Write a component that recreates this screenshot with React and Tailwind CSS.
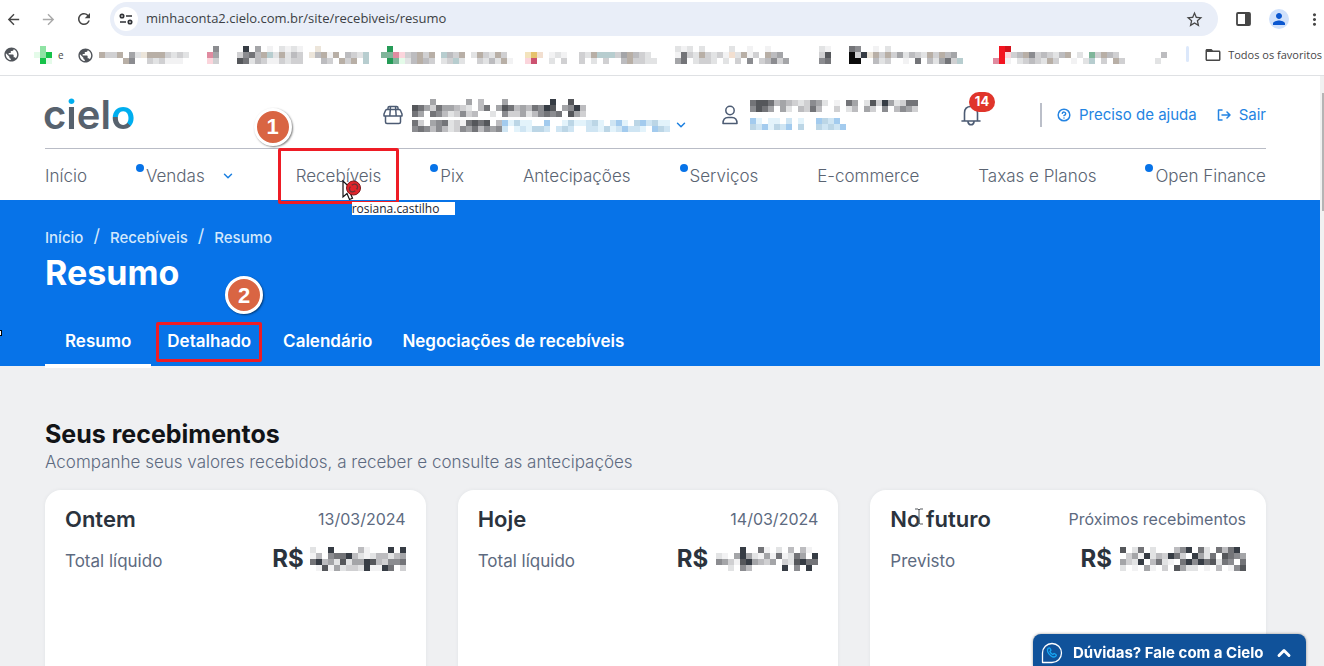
import { MdArrowBack, MdArrowForward, MdRefresh, MdStarBorder, MdMoreVert, MdPublic, MdFolderOpen, MdPerson } from 'react-icons/md'
import { ChevronDown, ChevronUp, CircleHelp } from 'lucide-react'

const MOSAIC_COLORS = {
  0: '#0a0a0a', 1: '#363c44', 2: '#55575b', 3: '#737478', 4: '#8b8c90', 5: '#a4a5a8', 6: '#bcbcbf', 7: '#d0d0d2', 8: '#e2e3e4', 9: '#f2f2f3',
  g: '#15c249', h: '#8fe3a4', i: '#e4fbe9', k: '#7fb59a', e: '#259b57', t: '#b7cdcf',
  p: '#e08ba0', q: '#fbd5dc', m: '#cc5270', r: '#f31420', u: '#d3121b', y: '#e6c36c', z: '#f3e3bd', o: '#f2dfd0',
  s: '#b8afa6', w: '#ece5da', b: '#a3cbee', c: '#cfe5f3', d: '#e3f3fb', f: '#bcd6e6',
}

const BOOKMARKS = [
  { name: 'Favorito 2', className: 'ml-[14px]', rows: ['.h.', 'ihg', '.gi'] },
  { name: 'Favorito 3', className: 'ml-[6px]', globe: true, rows: ['...............', 's77s.58wsss7878', '....s4..787999.'], prefix: 'e' },
  { name: 'Favorito 4', className: 'ml-[18px]', rows: ['.4', 'p5', 'q7'] },
  { name: 'Favorito 5', className: 'ml-[18px]', rows: ['.1.5.9.8989', '7436st8s867', '23867997877'] },
  { name: 'Favorito 6', className: 'ml-[6px]', rows: ['.w........', 'w6s9s.678t', '..67.s7s.t'] },
  { name: 'Favorito 7', className: 'ml-3', rows: ['.e....................', 'kkpq76s7s.t67s.8s78s7.', '.eki86s67.87t8..7868s9'] },
  { name: 'Favorito 8', className: 'ml-3', rows: ['...', 'zyo', 'qm.'] },
  { name: 'Favorito 9', className: 'ml-[6px]', rows: ['..................', '989..78sttt75s678.', '8.7..7.8.7..6s7788'] },
  { name: 'Favorito 10', className: 'ml-[18px]', rows: ['898.8....8..9..9....', '9378s7879o8s97.s65..', '53.8778.8.7.4.76475.'] },
  { name: 'Favorito 11', className: 'ml-6', rows: ['89', '72', '43'] },
  { name: 'Favorito 12', className: 'ml-[18px]', rows: ['34..9.8.............', '071ws7s758678s7s65..', '00..687..9.3.68537t.'] },
  { name: 'Favorito 13', className: 'ml-6', rows: ['.ru...................', '.rq76s476786s.8.k7s67.', 'pr9.87678s7..9.8t.7.s7'] },
  { name: 'Favorito 14', className: 'ml-[30px]', rows: ['..', '.6', '8.'] },
]

const NAV_ITEMS = [
  { label: 'Início' },
  { label: 'Vendas', dot: true, menu: true },
  { label: 'Recebíveis', marked: true },
  { label: 'Pix', dot: true },
  { label: 'Antecipações' },
  { label: 'Serviços', dot: true },
  { label: 'E-commerce' },
  { label: 'Taxas e Planos' },
  { label: 'Open Finance', dot: true },
]

const CARDS = [
  {
    title: 'Ontem', when: '13/03/2024', label: 'Total líquido', gap: 'gap-0',
    rows: ['.8..1....69...1.1', '.96.4331689866865', '.3165828551267443', '..9295877819913.7'],
  },
  {
    title: 'Hoje', when: '14/03/2024', label: 'Total líquido', gap: 'gap-2',
    rows: ['....1..39.8.6.69.', '89.515895939835.1', '4579215675.782133', '..8.46.....1.4.1.'],
  },
  {
    title: 'No futuro', when: 'Próximos recebimentos', label: 'Previsto', gap: 'gap-2',
    rows: ['2.83.8...641.38.3631.', '.7591867137.1583.2345', '5781.6389.314132834.3', '8.9.59.7.2588.9.6.942'],
  },
]

function Mosaic({ rows, className = '' }) {
  const width = rows[0].length * 6
  const height = rows.length * 6
  return (
    <svg width={width} height={height} viewBox={`0 0 ${width} ${height}`} shapeRendering="crispEdges" className={`shrink-0 ${className}`} aria-hidden="true">
      {rows.map((row, y) =>
        row.split('').map((c, x) =>
          c === '.' ? null : <rect key={`${x}-${y}`} x={x * 6} y={y * 6} width="6" height="6" fill={MOSAIC_COLORS[c]} />
        )
      )}
    </svg>
  )
}

function Step({ number, className }) {
  return (
    <span className={`absolute z-20 flex size-[38px] items-center justify-center rounded-full border-[3px] border-white bg-[#d96543] font-['Liberation_Sans'] text-[22px] font-bold text-white shadow-[1px_1px_2px_rgba(0,0,0,0.5)] ${className}`}>
      {number}
    </span>
  )
}

function BrowserBar() {
  return (
    <div className="border-b border-[#dfe1e4] bg-white font-['Open_Sans',sans-serif] text-[#474747]">
      <div className="flex h-[38px] items-center pl-[5px]">
        <button aria-label="Voltar" className="text-[#454545]"><MdArrowBack size={17} /></button>
        <button aria-label="Avançar" className="ml-[18px] text-[#a9a9a9]"><MdArrowForward size={17} /></button>
        <button aria-label="Recarregar" className="ml-[18px] text-[#454545]"><MdRefresh size={18} /></button>
        <div className="ml-[17px] flex h-[34px] flex-1 items-center rounded-full bg-[#e9eef8] pr-[14px] pl-1">
          <button aria-label="Informações do site" className="flex size-6 items-center justify-center rounded-full bg-white">
            <svg width="14" height="12" viewBox="0 0 14 12" fill="none" stroke="#303236" strokeWidth="1.7">
              <circle cx="3" cy="3" r="1.7" />
              <path d="M7 3h6M1 9h6" />
              <circle cx="11" cy="9" r="1.7" />
            </svg>
          </button>
          <input aria-label="Endereço" defaultValue="minhaconta2.cielo.com.br/site/recebiveis/resumo" className="ml-2 min-w-0 flex-1 bg-transparent text-[13px] text-[#3c3f44] outline-none" />
          <button aria-label="Adicionar aos favoritos"><MdStarBorder size={19} /></button>
        </div>
        <button aria-label="Painel lateral" className="ml-[18px]">
          <svg width="15" height="14" viewBox="0 0 15 14">
            <rect x="1" y="1" width="13" height="12" rx="1" fill="none" stroke="#454545" strokeWidth="1.8" />
            <path d="M9 1h5v12H9z" fill="#454545" />
          </svg>
        </button>
        <button aria-label="Perfil" className="ml-[18px] flex size-5 items-center justify-center rounded-full bg-[#d0e1fb] text-[#0b57d0]">
          <MdPerson size={18} />
        </button>
        <button aria-label="Menu" className="ml-4"><MdMoreVert size={19} /></button>
      </div>
      <div className="flex h-[37px] items-start overflow-hidden pt-2 pl-[3px]">
        <button aria-label="Favorito 1" className="text-[#50545a]"><MdPublic size={17} /></button>
        {BOOKMARKS.map(b => (
          <button key={b.name} aria-label={b.name} className={`flex shrink-0 items-center gap-[5px] ${b.className}`}>
            {b.prefix && <span className="mr-2 text-[10px] leading-4">{b.prefix}</span>}
            {b.globe && <MdPublic size={17} className="text-[#50545a]" />}
            <Mosaic rows={b.rows} />
          </button>
        ))}
        <span className="ml-auto h-4 w-[3px] shrink-0 rounded bg-[#dce8fb]" />
        <button className="ml-[15px] flex shrink-0 items-center gap-[6px] pr-[2px] text-[11px] leading-[18px] whitespace-nowrap">
          <MdFolderOpen size={18} />
          Todos os favoritos
        </button>
      </div>
    </div>
  )
}

function Logo() {
  return (
    <a href="#inicio" aria-label="cielo" className="-ml-[2px] block text-[40px] leading-[48px] font-semibold text-[#57626e]">
      c<span className="bg-linear-to-b from-[#00aeef] from-34% to-[#57626e] to-34% bg-clip-text text-transparent">i</span>el
      <span className="bg-[conic-gradient(from_-80deg_at_50%_58%,#00aeef_0deg_215deg,#57626e_215deg_360deg)] bg-clip-text text-transparent">o</span>
    </a>
  )
}

function Header() {
  return (
    <header className="bg-white pr-[54px] pl-[45px] text-[#5a6472]">
      <div className="flex h-[73px] items-center border-b border-[#b9bcc6] pt-[6px]">
        <div className="w-[338px]"><Logo /></div>
        <div className="flex w-[339px] items-center">
          <svg width="20" height="20" viewBox="0 0 20 20" fill="none" stroke="#4c5b73" strokeWidth="1.5" strokeLinejoin="round">
            <path d="M5 4.500V3q0-1.500 1.500-1.500h7Q15 1.500 15 3v1.500M4 4.500h12q1 0 1.500 1l1.500 3.500v2H1V9l1.500-3.500q.5-1 1.500-1zM7.500 1.500 6.800 11M12.500 1.500 13.200 11M2.500 11v6q0 1.500 1.500 1.500h12q1.500 0 1.500-1.500v-6" />
          </svg>
          <div className="ml-[9px] flex flex-col gap-[3px]">
            <Mosaic rows={['...5.....5.6...5.......1..2..', '2357355678.63.5236563412.5416', '35.34687476..8.4775864343.257']} />
            <Mosaic rows={['37.5438793232.6bdfdd..b..dfddcfd.cbd.fbcfdd', '434646874536454c.dcdffc.cfc..ccdfdcbccd.bfc']} />
          </div>
          <ChevronDown size={14} strokeWidth={2.5} className="mt-5 ml-1 shrink-0 text-[#1a7fe0]" />
        </div>
        <div className="flex w-[239px] items-center">
          <svg width="16" height="20" viewBox="0 0 16 20" fill="none" stroke="#4c5b73" strokeWidth="1.5" strokeLinejoin="round">
            <circle cx="8" cy="5.500" r="4.200" />
            <path d="M1 18.500q0-6 5-6h4q5 0 5 6z" />
          </svg>
          <div className="ml-3 flex flex-col gap-[6px]">
            <Mosaic rows={['3223656787458.9.35.827158733', '4235.58.6736..7.86.57.4.6457']} />
            <Mosaic rows={['bd.dd.c.d..bfcb.', 'fcbdfcb.f..fcfcb']} />
          </div>
        </div>
        <button aria-label="Notificações, 14 novas" className="relative">
          <svg width="20" height="22" viewBox="0 0 20 22" fill="none" stroke="#4c5b73" strokeWidth="1.6" strokeLinejoin="round">
            <path d="M1 17h18M3.500 17V9q0-6.500 6.500-6.500T16.500 9v8M7 18q.5 2.700 3 2.700T13 18" strokeLinecap="round" />
          </svg>
          <span className="absolute -top-3 left-2 flex h-5 w-[26px] items-center justify-center rounded-full bg-[#e0352b] text-[13px] font-bold text-white">14</span>
        </button>
        <div className="ml-auto flex h-6 items-center border-l-2 border-[#bbbfc9] pl-[15px] text-[15px] whitespace-nowrap text-[#2484e2]">
          <a href="#ajuda" className="flex items-center gap-2"><CircleHelp size={14} strokeWidth={2.5} />Preciso de ajuda</a>
          <a href="#sair" className="ml-5 flex items-center gap-2">
            <svg width="14" height="12" viewBox="0 0 14 12" fill="none" stroke="currentColor" strokeWidth="1.500" strokeLinecap="round" strokeLinejoin="round">
              <path d="M5 1H1.500v10H5M5 6h8M10 3l3 3-3 3" />
            </svg>
            Sair
          </a>
        </div>
      </div>
      <nav className="flex h-[51px] items-center justify-between pt-[2px] text-[17px] leading-6 font-light whitespace-nowrap">
        {NAV_ITEMS.map(item => (
          <a key={item.label} href="#menu" className="relative flex items-center">
            {item.dot && <span className="absolute top-0 -left-[10px] size-2 rounded-full bg-[#0773e8]" />}
            {item.label}
            {item.menu && <ChevronDown size={14} strokeWidth={2.5} className="mr-[2px] ml-4 text-[#1a7fe0]" />}
            {item.marked && (
              <>
                <span className="absolute -inset-x-[18px] -inset-y-4 z-10 rounded-xs border-[3px] border-[#ee1c25]" />
                <Step number={1} className="-top-14 -left-[42px]" />
                <Pointer />
              </>
            )}
          </a>
        ))}
      </nav>
    </header>
  )
}

function Pointer() {
  return (
    <span className="absolute top-4 left-[46px] z-20">
      <svg width="22" height="22" viewBox="0 0 22 22">
        <path d="M1 1v16l4-3.500 2.500 6 3-1.300L8 12.500h5z" fill="#fff" stroke="#111" strokeWidth="1.200" />
        <circle cx="11.500" cy="8" r="7" fill="#e0242b" stroke="#7c1518" />
        <ellipse cx="11.500" cy="8" rx="4.500" ry="3.200" transform="rotate(-40 11.500 8)" fill="none" stroke="#6d3335" strokeWidth="1.500" />
        <path d="M8 5l7 6" stroke="#e0242b" strokeWidth="2" />
      </svg>
      <span className="absolute top-[22px] left-[10px] w-[103px] bg-white font-['Open_Sans',sans-serif] text-xs leading-[13px] font-normal text-[#1d2430]">rosiana.castilho</span>
    </span>
  )
}

function PageTitle() {
  return (
    <section className="bg-[#0773e8] pr-[54px] pl-[45px] text-white">
      <div className="flex items-center pt-7 text-[15px] leading-5 font-medium text-[#d3e8fc]">
        <a href="#inicio">Início</a>
        <span className="mx-[10px] pb-1 text-lg leading-4 font-normal">/</span>
        <a href="#recebiveis">Recebíveis</a>
        <span className="mx-[10px] pb-1 text-lg leading-4 font-normal">/</span>
        <span>Resumo</span>
      </div>
      <h1 className="mt-[5px] text-[34px] leading-10 font-bold">Resumo</h1>
      <div className="mt-[25px] flex h-12 items-center text-[17px] font-semibold whitespace-nowrap">
        <button className="relative h-full px-5">
          Resumo
          <span className="absolute inset-x-0 -bottom-[2px] h-1 bg-white" />
        </button>
        <button className="relative h-full px-4">
          Detalhado
          <span className="absolute inset-x-[5px] top-1 bottom-1 rounded-xs border-[3px] border-[#ee1c25]" />
          <Step number={2} className="-top-[42px] right-1" />
        </button>
        <button className="h-full px-4">Calendário</button>
        <button className="h-full px-[14px]">Negociações de recebíveis</button>
      </div>
    </section>
  )
}

function Card({ card }) {
  return (
    <article className="min-h-60 rounded-2xl bg-white px-5 pt-[15px] shadow-[0_0_4px_rgba(40,50,70,0.06)]">
      <div className="flex items-center justify-between">
        <h3 className="text-[22px] leading-7 font-semibold text-[#2b333d]">{card.title}</h3>
        <span className="text-base text-[#5d6a80]">{card.when}</span>
      </div>
      <div className="mt-[10px] flex items-end justify-between">
        <span className="text-[17px] leading-7 text-[#5d6a80]">{card.label}</span>
        <span className={`flex items-center text-2xl leading-8 font-bold text-[#2b333d] ${card.gap}`}>
          R$
          <Mosaic rows={card.rows} />
        </span>
      </div>
    </article>
  )
}

export default function App() {
  return (
    <div className="flex h-screen flex-col overflow-hidden bg-[#eff0f2] font-['Inter',sans-serif]">
      <BrowserBar />
      <div className="flex min-h-0 flex-1">
        <div className="min-w-0 flex-1">
          <Header />
          <PageTitle />
          <main className="pt-[52px] pr-[54px] pl-[45px]">
            <h2 className="text-[25px] leading-8 font-bold text-[#121417]">Seus recebimentos</h2>
            <p className="text-[17px] leading-6 font-light text-[#5d6a80]">Acompanhe seus valores recebidos, a receber e consulte as antecipações</p>
            <div className="mt-4 grid grid-cols-[381fr_381fr_396fr] gap-8">
              {CARDS.map(card => <Card key={card.title} card={card} />)}
            </div>
          </main>
        </div>
        <div className="w-1 bg-[#f1f1f1] pt-[17px] pl-[2px]">
          <div className="h-[118px] bg-[#b5b5b5]" />
        </div>
      </div>

      {/* Text cursor over the last card title */}
      <svg width="8" height="17" viewBox="0 0 8 17" className="absolute top-[508px] left-[915px]" fill="none" stroke="#55585c" aria-hidden="true">
        <path d="M0 1h3l1 1 1-1h3M4 2v13M0 16h3l1-1 1 1h3" />
      </svg>
      <span className="absolute top-[330px] -left-[4px] size-[6px] border border-black bg-white" />

      <button className="fixed right-[18px] bottom-0 flex h-8 w-[273px] items-center rounded-t-lg bg-[#10529a] pt-[6px] pr-3 pl-2 text-[15px] font-bold whitespace-nowrap text-white shadow-[0_0_3px_rgba(0,0,0,0.4)]">
        <svg width="22" height="22" viewBox="0 0 22 22" fill="none" strokeWidth="1.300" className="mr-[10px]">
          <path d="M1.500 20.500V11A9.500 9.500 0 1 1 11 20.500z" stroke="#fff" strokeLinejoin="round" />
          <path d="M7 6.500q1.500-1.500 2.300.3l.6 1.400-1 1.300q.8 2 2.900 3l1.300-1 1.500.8q1.500 1-.2 2.200-1.700 1.300-4.300-.6-2.700-2-3.400-4.100-.7-2.100.3-3.300z" stroke="#17a8f5" />
        </svg>
        Dúvidas? Fale com a Cielo
        <ChevronUp size={20} strokeWidth={3.5} className="ml-auto" />
      </button>
    </div>
  )
}
